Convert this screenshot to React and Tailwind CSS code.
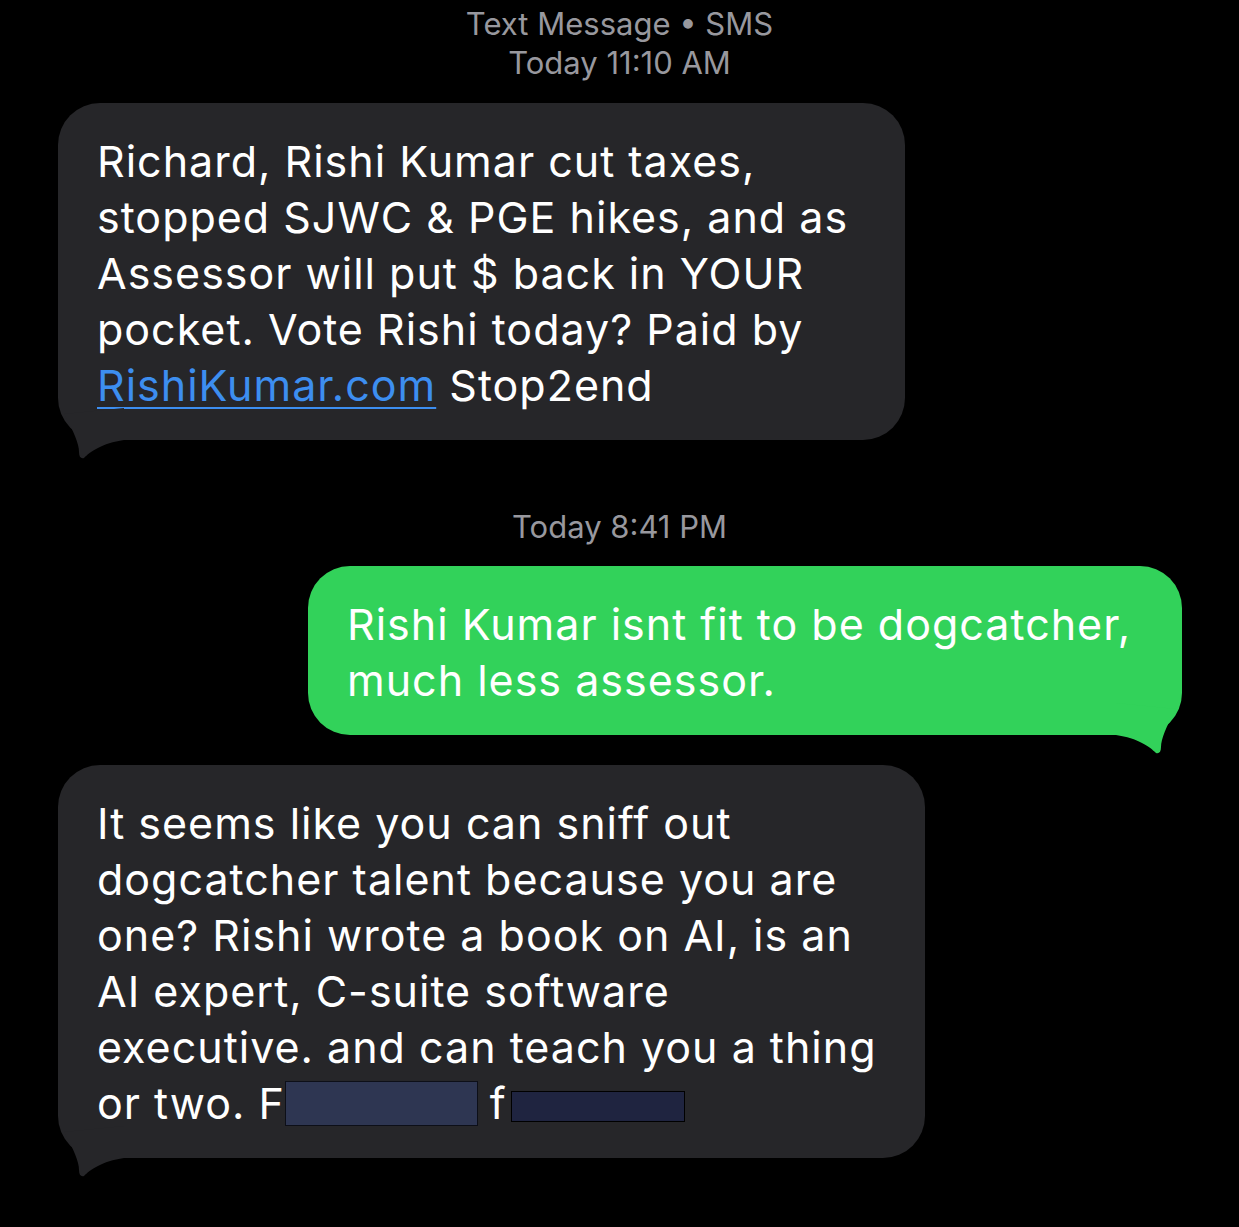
import React from 'react';

const font = { fontFamily: 'Inter, "Liberation Sans", sans-serif' };

const Tail = ({ color, flip }) => (
  <svg
    width="70"
    height="62"
    viewBox="0 0 70 62"
    className={`absolute top-full -mt-[40px] ${flip ? 'right-0 -scale-x-100' : 'left-0'}`}
  >
    <path
      d="M6 14 C16 32 21 44 21 52 C21 57 23 59 26 58 C32 52 44 43 66 40 L66 8 Z"
      fill={color}
    />
  </svg>
);

const Bubble = ({ children, sent, className = '' }) => (
  <div
    className={`relative rounded-[42px] px-[39px] pt-[30px] pb-[27px] text-[43px] leading-[56px] text-white tracking-[1px] whitespace-nowrap ${
      sent ? 'bg-[#32d25a]' : 'bg-[#262629]'
    } ${className}`}
  >
    {children}
    <Tail color={sent ? '#32d25a' : '#262629'} flip={sent} />
  </div>
);

export default function App() {
  return (
    <div className="w-full h-[1227px] bg-black overflow-hidden flex flex-col" style={font}>
      <div className="pt-[4px] text-center text-[31px] leading-[39px] text-[#98989e]">
        <div>Text Message • SMS</div>
        <div>Today 11:10 AM</div>
      </div>

      <div className="mt-[21px] pl-[58px]">
        <Bubble className="w-[847px]">
          <div>Richard, Rishi Kumar cut taxes,</div>
          <div>stopped SJWC &amp; PGE hikes, and as</div>
          <div>Assessor will put $ back in YOUR</div>
          <div>pocket. Vote Rishi today? Paid by</div>
          <div>
            <span className="text-[#3d8ef0] underline decoration-2 underline-offset-[6px]">RishiKumar.com</span> Stop2end
          </div>
        </Bubble>
      </div>

      <div className="mt-[67px] text-center text-[31px] leading-[39px] text-[#98989e]">Today 8:41 PM</div>

      <div className="mt-[20px] flex justify-end pr-[57px]">
        <Bubble sent className="w-[874px]">
          <div>Rishi Kumar isnt fit to be dogcatcher,</div>
          <div>much less assessor.</div>
        </Bubble>
      </div>

      <div className="mt-[30px] pl-[58px]">
        <Bubble className="w-[867px]">
          <div>It seems like you can sniff out</div>
          <div>dogcatcher talent because you are</div>
          <div>one? Rishi wrote a book on AI, is an</div>
          <div>AI expert, C-suite software</div>
          <div>executive. and can teach you a thing</div>
          <div className="flex items-center">
            <span>or two. F</span>
            <span className="inline-block w-[193px] h-[45px] bg-[#2e3652] border border-[#0d0f18]" />
            <span className="ml-[12px]">f</span>
            <span className="inline-block w-[174px] h-[31px] bg-[#1f2440] border border-black ml-[4px] mt-[6px]" />
          </div>
        </Bubble>
      </div>
    </div>
  );
}
